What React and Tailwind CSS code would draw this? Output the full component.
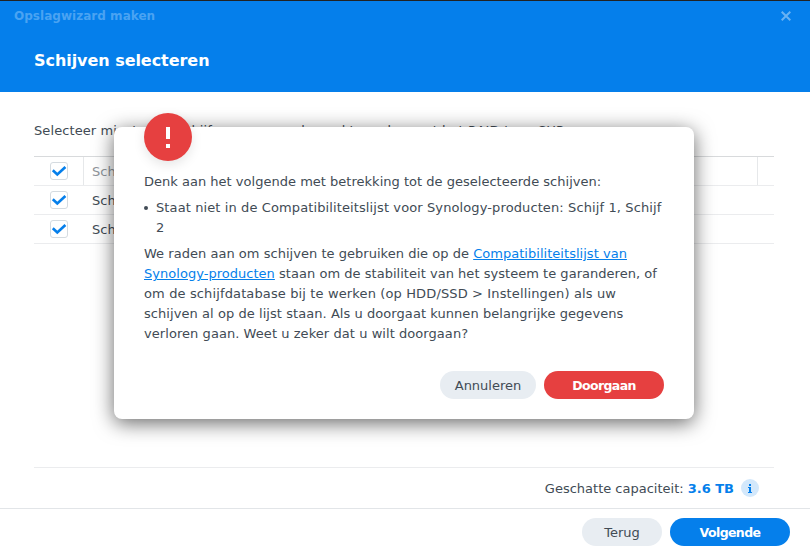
import React from "react";

function Checkbox() {
  return (
    <span className="flex h-[18px] w-[18px] items-center justify-center rounded-[3px] border border-[#d5dbe0] bg-white">
      <svg className="shrink-0" width="16" height="16" viewBox="0 0 16 16" fill="none">
        <path d="M1.8 7.3 6.3 11.5 14.4 4" stroke="#057feb" strokeWidth="2.6" />
      </svg>
    </span>
  );
}

function Row({ label, header }) {
  return (
    <div className="flex h-[29px] border-b border-[#ebecee]">
      <div className={`flex w-[50px] items-center justify-center ${header ? "border-r border-[#e6e8ea]" : ""}`}>
        <Checkbox />
      </div>
      <div className={`flex-1 pl-2 leading-[30px] ${header ? "text-[#8f959b]" : ""}`}>{label}</div>
      {header && <div className="w-[17px] border-l border-[#e6e8ea]" />}
    </div>
  );
}

function Dialog() {
  return (
    <div className="absolute left-[114px] top-[127px] h-[292px] w-[580px] rounded-[8px] bg-white px-[30px] pt-[45px] shadow-[0_4px_20px_rgba(0,0,0,0.6)]">
      <div className="absolute left-[30px] top-[-14px] flex h-12 w-12 flex-col items-center gap-[5px] rounded-full bg-[#e64040] pt-[14px] shadow-[0_4px_12px_rgba(0,0,0,0.1)]">
        <span className="h-[12px] w-1 bg-white" />
        <span className="h-1 w-1 bg-white" />
      </div>
      <div className="whitespace-nowrap leading-5">
        <p className="tracking-[0.015px]">Denk aan het volgende met betrekking tot de geselecteerde schijven:</p>
        <div className="mt-[6px] flex">
          <span className="mt-[8px] mr-2 h-1 w-1 rounded-full bg-[#414b55]" />
          <div>
            <p className="tracking-[0.11px]">Staat niet in de Compatibiliteitslijst voor Synology-producten: Schijf 1, Schijf</p>
            <p>2</p>
          </div>
        </div>
        <div className="mt-[6px]">
          <p className="tracking-[0.03px]">We raden aan om schijven te gebruiken die op de <a className="text-[#057feb] underline">Compatibiliteitslijst van</a></p>
          <p className="tracking-[0.03px]"><a className="text-[#057feb] underline">Synology-producten</a> staan om de stabiliteit van het systeem te garanderen, of</p>
          <p className="tracking-[0.13px]">om de schijfdatabase bij te werken (op HDD/SSD &gt; Instellingen) als uw</p>
          <p className="tracking-[0.06px]">schijven al op de lijst staan. Als u doorgaat kunnen belangrijke gegevens</p>
          <p className="tracking-[0.06px]">verloren gaan. Weet u zeker dat u wilt doorgaan?</p>
        </div>
      </div>
      <div className="mt-[27px] flex justify-end gap-2 text-center leading-[30px]">
        <button className="h-7 w-24 rounded-full bg-[#e8edf2] leading-[28px] pt-px">Annuleren</button>
        <button className="h-7 w-[120px] rounded-full bg-[#e64040] pt-px text-[12.5px] font-bold leading-[28px] tracking-[-0.6px] text-white">Doorgaan</button>
      </div>
    </div>
  );
}

export default function App() {
  return (
    <div className="relative flex h-[552px] w-[810px] flex-col overflow-hidden bg-white font-['Verdana','DejaVu_Sans',sans-serif] text-[13px] text-[#414b55]">
      <header className="h-[92px] border-t border-[#222] bg-[#057feb]">
        <div className="flex h-[30px] items-center justify-between pl-[14px] pr-[19px] font-bold text-[#4aa3f2]">
          <span className="text-[12px] tracking-[0.03px]">Opslagwizard maken</span>
          <svg width="10" height="10" viewBox="0 0 10 10">
            <path d="M.7.7 9.3 9.3M9.3.7.7 9.3" stroke="#69b2f3" strokeWidth="2" />
          </svg>
        </div>
        <h1 className="pl-[34px] pt-[18px] text-[16px] font-bold leading-6 tracking-[-0.05px] text-white">Schijven selecteren</h1>
      </header>
      <main className="flex h-[416px] flex-col pl-[34px] pr-[36px] pt-[29px]">
        <p className="whitespace-nowrap leading-5 tracking-[0.09px]">Selecteer minstens 1 schijf waarvoor ze bewerkt worden met het RAID-type SHR.</p>
        <div className="mt-[15px] border-t border-[#d8dadc]">
          <Row label="Schijf" header />
          <Row label="Schijf 1" />
          <Row label="Schijf 2" />
        </div>
        <div className="mt-auto flex h-[41px] items-center justify-end border-t border-[#ebecee] pr-[15px]">
          <span className="pt-0.5">Geschatte capaciteit:</span>
          <span className="ml-[4px] pt-0.5 font-bold text-[#057feb]">3.6 TB</span>
          <span className="ml-[7px] flex h-[18px] w-[18px] items-center justify-center rounded-full bg-[#d3e8fb]">
            <svg width="6" height="9" viewBox="0 0 6 9" fill="#057feb">
              <path d="M2 0h2v2H2zM1 3h3v5h1v1H1V8h1V4H1z" />
            </svg>
          </span>
        </div>
      </main>
      <footer className="flex h-[44px] justify-end gap-2 border-t border-[#e2e5e8] pr-5 pt-[9px] text-center">
        <button className="h-7 w-20 rounded-full bg-[#e8edf2] pt-px leading-[28px]">Terug</button>
        <button className="h-7 w-[120px] rounded-full bg-[#057feb] pt-px text-[12.5px] font-bold leading-[28px] tracking-[-0.6px] text-white">Volgende</button>
      </footer>
      <Dialog />
    </div>
  );
}
